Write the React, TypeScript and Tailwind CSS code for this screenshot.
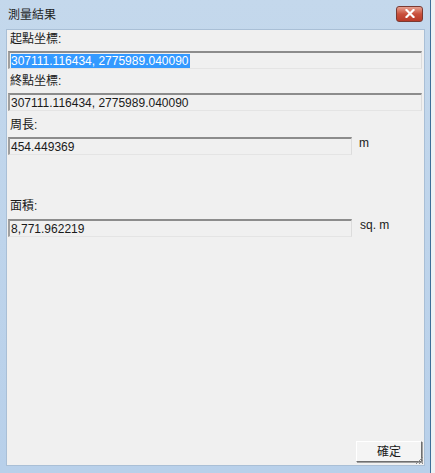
const font = "font-['Liberation_Sans','Noto_Sans_CJK_TC',sans-serif]";

function Field({ value, selected, wide }: { value: string; selected?: boolean; wide?: boolean }) {
  return (
    <div
      className={`h-[18px] border-t-2 border-l-2 border-t-[#8c8c8c] border-l-[#a0a0a0] border-r border-b border-r-[#dcdcdc] border-b-[#e4e4e4] bg-[#f0f0f0] flex items-center pl-px text-[12px] text-[#1a1a1a] ${
        wide ? "w-[414px]" : "w-[344px]"
      }`}
    >
      <span className={selected ? "bg-[#3399ff] text-white leading-[14px] pr-px" : "leading-[14px]"}>{value}</span>
    </div>
  );
}

function Label({ text }: { text: string }) {
  return <div className="text-[12px] leading-[16px] text-[#1a1a1a] pl-[2px]">{text}</div>;
}

export default function App() {
  return (
    <div className={`w-[435px] h-[473px] bg-[#eef1f3] flex ${font}`}>
      <div className="w-[431px] h-[473px] bg-gradient-to-b from-[#c4d8ec] to-[#b8d0ea] border-r border-r-[#3d6f98] flex flex-col">
        {/* Title bar */}
        <div className="h-[29px] flex items-center pl-[8px] pr-[7px]">
          <span className="text-[12px] text-[#1e1e1e] flex-1 pt-[1px]">測量結果</span>
          <div className="w-[27px] h-[16px] mb-[2px] rounded-[3px] border border-[#7a3a32] bg-gradient-to-b from-[#e6a091] via-[#c9503c] to-[#b83a28] flex items-center justify-center">
            <svg width="10" height="9" viewBox="0 0 10 9">
              <path d="M1.5 1 L8.5 8 M8.5 1 L1.5 8" stroke="#fff" strokeWidth="2.2" strokeLinecap="square" />
            </svg>
          </div>
        </div>
        {/* Client area */}
        <div className="relative ml-[6px] w-[419px] h-[437px] bg-[#f0f0f0] border border-[#a9bfd6] flex flex-col pl-px">
          <div className="mt-[1px]"><Label text="起點坐標:" /></div>
          <div className="mt-[4px]"><Field value="307111.116434, 2775989.040090" selected wide /></div>
          <div className="mt-[4px]"><Label text="終點坐標:" /></div>
          <div className="mt-[4px]"><Field value="307111.116434, 2775989.040090" wide /></div>
          <div className="mt-[6px]"><Label text="周長:" /></div>
          <div className="mt-[4px] flex items-start gap-[7px]">
            <Field value="454.449369" />
            <span className="text-[12px] text-[#1a1a1a] leading-[14px] -mt-[1px]">m</span>
          </div>
          <div className="mt-[43px]"><Label text="面積:" /></div>
          <div className="mt-[5px] flex items-start gap-[8px]">
            <Field value="8,771.962219" />
            <span className="text-[12px] text-[#1a1a1a] leading-[14px] -mt-[1px]">sq. m</span>
          </div>
          <div className="flex-1" />
          <div className="flex justify-end pr-[2px] mb-[3px]">
            <button className="w-[66px] h-[21px] bg-[#f4f4f4] border border-t-white border-l-white border-r-[#6f6f6f] border-b-[#6f6f6f] shadow-[1px_1px_0_#a0a0a0] text-[12px] text-[#1a1a1a]">
              確定
            </button>
          </div>
          {/* size grip */}
          <svg className="absolute right-0 bottom-0" width="10" height="10" viewBox="0 0 10 10">
            <path d="M9 2 L2 9 M9 5 L5 9 M9 8 L8 9" stroke="#8a8a8a" strokeWidth="1" />
          </svg>
        </div>
      </div>
    </div>
  );
}
